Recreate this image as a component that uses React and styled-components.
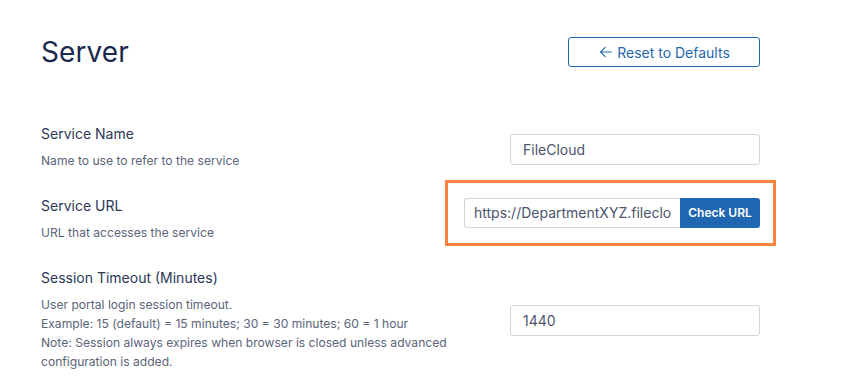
import React from "react";
import styled, { createGlobalStyle } from "styled-components";

const Global = createGlobalStyle`
  html, body { margin: 0; padding: 0; background: #ffffff; }
  body { font-family: Inter, "Noto Sans", "Liberation Sans", sans-serif; -webkit-font-smoothing: antialiased; }
  * { box-sizing: border-box; }
`;

const Page = styled.div`
  width: 760px;
  padding: 35px 0 0 41px;
`;

const Header = styled.div`
  display: flex;
  align-items: center;
  justify-content: space-between;
  margin-bottom: 55px;
`;

const Title = styled.h1`
  margin: 0;
  font-size: 28px;
  line-height: 34px;
  font-weight: 400;
  color: #1a2a4d;
  letter-spacing: 0.1px;
`;

const OutlineButton = styled.button`
  display: flex;
  align-items: center;
  justify-content: center;
  gap: 3px;
  width: 192px;
  height: 30px;
  border: 1px solid #1f6ab3;
  border-radius: 3px;
  background: #fff;
  color: #2468ad;
  font-family: inherit;
  font-size: 14px;
  padding: 0;
  cursor: pointer;
`;

const Settings = styled.div`
  display: flex;
  flex-direction: column;
  gap: 26px;
`;

const Row = styled.div`
  display: grid;
  grid-template-columns: 410px 1fr;
  align-items: center;
`;

const Info = styled.div`
  display: flex;
  flex-direction: column;
  gap: 7px;
`;

const Label = styled.div`
  font-size: 14px;
  line-height: 20px;
  color: #2a3856;
`;

const Desc = styled.div`
  font-size: 12.1px;
  line-height: 19px;
  color: #5a6479;
`;

const Control = styled.div`
  justify-self: end;
  margin-top: ${(p) => p.$nudge || 0}px;
`;

const TextInput = styled.input`
  width: 250px;
  height: 31px;
  border: 1px solid #d2d6dc;
  border-radius: 3px;
  padding: 0 12px;
  font-family: inherit;
  font-size: 14px;
  color: #4b556e;
  background: #fff;
  outline: none;
`;

const Highlight = styled.div`
  border: 3px solid #f7843f;
  margin: -18px -16px -18px -19px;
  padding: 15px 13px 15px 16px;
`;

const Group = styled.div`
  display: flex;
  width: 296px;
  height: 30px;
`;

const GroupInput = styled.input`
  flex: 1;
  min-width: 0;
  height: 30px;
  border: 1px solid #d2d6dc;
  border-right: none;
  border-radius: 3px 0 0 3px;
  padding: 0 9px;
  font-family: inherit;
  font-size: 14px;
  color: #4b556e;
  background: #fff;
  outline: none;
`;

const SolidButton = styled.button`
  width: 80px;
  height: 30px;
  border: none;
  border-radius: 0 3px 3px 0;
  background: #1f67b0;
  color: #fff;
  font-family: inherit;
  font-size: 12px;
  font-weight: 600;
  padding: 0;
  cursor: pointer;
`;

const ArrowLeft = () => (
  <svg width="16" height="16" viewBox="0 0 24 24" fill="none" stroke="currentColor" strokeWidth="1.6" strokeLinecap="round" strokeLinejoin="round">
    <path d="M20 12H4" />
    <path d="M11 19l-7-7 7-7" />
  </svg>
);

export default function App() {
  return (
    <>
      <Global />
      <Page>
        <Header>
          <Title>Server</Title>
          <OutlineButton>
            <ArrowLeft />
            Reset to Defaults
          </OutlineButton>
        </Header>
        <Settings>
          <Row>
            <Info>
              <Label>Service Name</Label>
              <Desc>Name to use to refer to the service</Desc>
            </Info>
            <Control $nudge={4}>
              <TextInput defaultValue="FileCloud" />
            </Control>
          </Row>
          <Row>
            <Info>
              <Label>Service URL</Label>
              <Desc>URL that accesses the service</Desc>
            </Info>
            <Control $nudge={-13}>
              <Highlight>
                <Group>
                  <GroupInput defaultValue="https://DepartmentXYZ.filecloudonline.com" />
                  <SolidButton>Check URL</SolidButton>
                </Group>
              </Highlight>
            </Control>
          </Row>
          <Row>
            <Info>
              <Label>Session Timeout (Minutes)</Label>
              <Desc>
                User portal login session timeout.
                <br />
                Example: 15 (default) = 15 minutes; 30 = 30 minutes; 60 = 1 hour
                <br />
                Note: Session always expires when browser is closed unless advanced configuration is added.
              </Desc>
            </Info>
            <Control $nudge={2}>
              <TextInput defaultValue="1440" />
            </Control>
          </Row>
        </Settings>
      </Page>
    </>
  );
}
